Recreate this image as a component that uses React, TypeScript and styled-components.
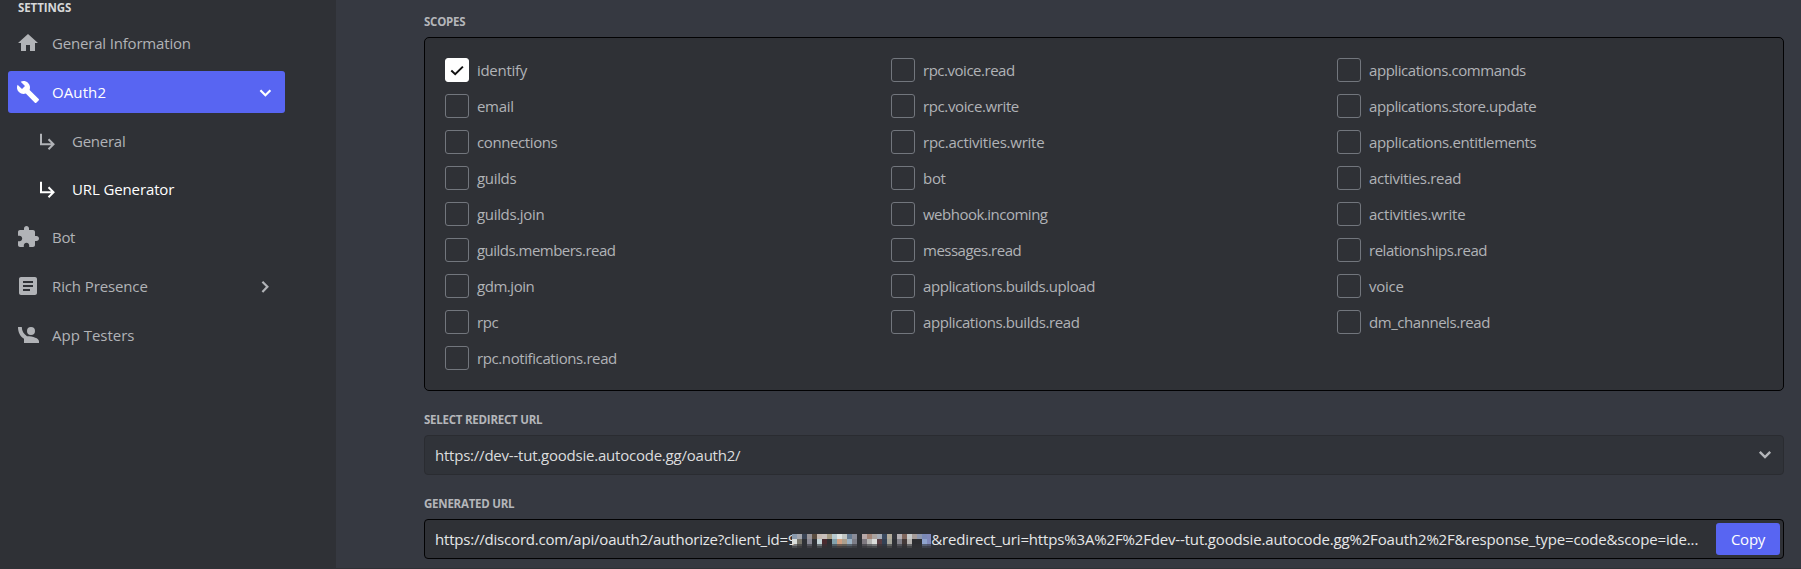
import React, { useState } from "react";
import styled, { createGlobalStyle } from "styled-components";

const Global = createGlobalStyle`
  * { box-sizing: border-box; }
  body {
    margin: 0;
    background: #36393f;
    font-family: "Open Sans", "Noto Sans", sans-serif;
    overflow: hidden;
  }
`;

const Page = styled.div`
  display: flex;
  height: 569px;
  overflow: hidden;
  background: #363941;
  border-bottom: 1px solid #2f3136;
`;

const Sidebar = styled.nav`
  width: 336px;
  flex: none;
  padding: 1px 51px 0 8px;
  background: #2f3136;
`;

const Heading = styled.h2`
  margin: 0;
  height: 14px;
  font-size: 11.5px;
  line-height: 14px;
  font-weight: 700;
  white-space: nowrap;
  letter-spacing: -0.24px;
  color: #b4b6ba;
`;

const SidebarHeading = styled(Heading)`
  padding: 0 0 0 10px;
  letter-spacing: -0.1px;
  color: #d6d7d9;
`;

const NavList = styled.div`
  display: flex;
  flex-direction: column;
  padding-top: 7px;
`;

const NavItem = styled.a<{ $active?: boolean }>`
  display: flex;
  align-items: center;
  height: 42px;
  margin-bottom: 7px;
  padding: 0 8px;
  border-radius: 3px;
  color: ${(p) => (p.$active ? "#fff" : "#b1b3b7")};
  background: ${(p) => (p.$active ? "#5865f2" : "transparent")};
`;

const SubItem = styled(NavItem)<{ $current?: boolean }>`
  height: 41px;
  padding-left: 28px;
  color: ${(p) => (p.$current ? "#fff" : "#b1b3b7")};
`;

const Icon = styled.svg`
  width: 24px;
  height: 24px;
  flex: none;
`;

const Label = styled.span<{ $tracking?: number }>`
  font-size: 15px;
  line-height: 20px;
  white-space: nowrap;
  letter-spacing: ${(p) => p.$tracking ?? -0.3}px;
`;

const NavLabel = styled(Label)`
  flex: 1;
  margin-left: 12px;
`;

const Main = styled.main`
  flex: 1;
  min-width: 0;
  padding: 15px 17px 0 88px;
`;

const ScopeBox = styled.div`
  display: grid;
  grid-template-columns: repeat(3, 1fr);
  height: 354px;
  margin: 8px 0 22px;
  padding: 20px 0 20px 20px;
  border: 1px solid #020203;
  border-radius: 5px;
  background: #2f3136;
`;

const ScopeColumn = styled.div`
  display: flex;
  flex-direction: column;
  gap: 12px;
`;

const Scope = styled.label`
  display: flex;
  align-items: center;
  gap: 8px;
  height: 24px;
  color: #b1b3b7;
`;

const Box = styled.span<{ $on: boolean }>`
  display: flex;
  align-items: center;
  justify-content: center;
  width: 24px;
  height: 24px;
  border: 1px solid ${(p) => (p.$on ? "#fff" : "#72767d")};
  border-radius: 3px;
  background: ${(p) => (p.$on ? "#fff" : "transparent")};
  color: #111;
`;

const Field = styled.div<{ $dark?: boolean }>`
  display: flex;
  align-items: center;
  height: 40px;
  margin: 8px 0 22px;
  padding: 0 3px 0 10px;
  border: 1px solid ${(p) => (p.$dark ? "#020203" : "#2a2c31")};
  border-radius: 4px;
  background: ${(p) => (p.$dark ? "#2f3136" : "#303339")};
  color: ${(p) => (p.$dark ? "#e6e7e8" : "#dcddde")};
`;

const Spacer = styled.span`
  flex: 1;
`;

const SelectArrow = styled.span`
  display: flex;
  margin-right: 3px;
  color: #b4b6ba;
`;

const Mosaic = styled.svg`
  width: 139px;
  height: 14px;
  flex: none;
  margin: 4px 0 0 -4px;
`;

const CopyButton = styled.button`
  width: 64px;
  height: 32px;
  padding: 0;
  border: 0;
  border-radius: 3px;
  background: #5865f2;
  color: #fff;
  font-family: inherit;
`;

const PATHS = {
  home: "M10 20v-6h4v6h5v-8h3L12 3 2 12h3v8z",
  wrench:
    "M22.7 19l-9.1-9.1c.9-2.3.4-5-1.5-6.9-2-2-5-2.4-7.4-1.3L9 6 6 9 1.6 4.7C.4 7.1.9 10.1 2.9 12.1c1.9 1.9 4.6 2.4 6.9 1.5l9.1 9.1c.4.4 1 .4 1.4 0l2.3-2.3c.5-.4.5-1.1.1-1.4z",
  puzzle:
    "M20.5 11H19V7c0-1.1-.9-2-2-2h-4V3.5C13 2.12 11.88 1 10.5 1S8 2.12 8 3.5V5H4c-1.1 0-1.99.9-1.99 2v3.8H3.5c1.49 0 2.7 1.21 2.7 2.7s-1.21 2.7-2.7 2.7H2V20c0 1.1.9 2 2 2h3.8v-1.5c0-1.49 1.21-2.7 2.7-2.7 1.49 0 2.7 1.21 2.7 2.7V22H17c1.1 0 2-.9 2-2v-4h1.5c1.38 0 2.5-1.12 2.5-2.5S21.88 11 20.5 11z",
  article:
    "M19 3H5c-1.1 0-2 .9-2 2v14c0 1.1.9 2 2 2h14c1.1 0 2-.9 2-2V5c0-1.1-.9-2-2-2zm-5 14H7v-2h7v2zm3-4H7v-2h10v2zm0-4H7V7h10v2z",
  person:
    "M2 4h3.8c0 3.7 1.8 7 5.2 9.2C17 13.2 23 15.2 23 18.3V20H8v-4.2C4.2 13.5 2 9.2 2 4zM15 4a4 4 0 1 1 0 8 4 4 0 0 1 0-8z",
};

const STROKES = {
  sub: "M5 4.8v10.5h12.5M12.5 10.3l5 5-5 5",
  down: "M7.4 10.3l5 5 5-5",
  select: "M6.8 8.8l5.2 5.2 5.2-5.2",
  right: "M9.4 7.7l5 5.1-5 5.1",
  check: "M6.3 12.6l3.9 3.6L17.9 8.6",
};

function Glyph({ name }: { name: keyof typeof PATHS }) {
  return (
    <Icon viewBox="0 0 24 24" fill="currentColor">
      <path d={PATHS[name]} />
    </Icon>
  );
}

function Line({ name, width = 2.2 }: { name: keyof typeof STROKES; width?: number }) {
  return (
    <Icon viewBox="0 0 24 24" fill="none" stroke="currentColor" strokeWidth={width}>
      <path d={STROKES[name]} />
    </Icon>
  );
}

type ScopeEntry = [name: string, tracking: number];

const COLUMNS: ScopeEntry[][] = [
  [
    ["identify", -0.3],
    ["email", -0.3],
    ["connections", -0.4],
    ["guilds", -0.33],
    ["guilds.join", -0.33],
    ["guilds.members.read", -0.52],
    ["gdm.join", -0.45],
    ["rpc", -0.35],
    ["rpc.notifications.read", -0.4],
  ],
  [
    ["rpc.voice.read", -0.48],
    ["rpc.voice.write", -0.38],
    ["rpc.activities.write", -0.25],
    ["bot", -0.3],
    ["webhook.incoming", -0.5],
    ["messages.read", -0.5],
    ["applications.builds.upload", -0.43],
    ["applications.builds.read", -0.42],
  ],
  [
    ["applications.commands", -0.44],
    ["applications.store.update", -0.43],
    ["applications.entitlements", -0.37],
    ["activities.read", -0.3],
    ["activities.write", -0.22],
    ["relationships.read", -0.47],
    ["voice", -0.25],
    ["dm_channels.read", -0.45],
  ],
];

const MOSAIC_ROWS = [
  "#8999ac #a4a6ad #3b4556 #999599 #5b4d40 #c6bab2 #c7bfbb #a59c84 #b6cad0 #dfe3e0 #c1c5c3 #657b93 #8a8c98 - #b8a9a9 #a38476 #a9a29f #a5abb5 #3b4a60 #b3ac9b #34363d #b4b0b5 #80675e #c6cacb #a59b98 #8d97af #7b8ab7 #8189bb",
  "#d9dddb #77746a #2f3136 #8a8995 #2f3136 #c4d4d8 #4a2b30 #2d2e32 #82a1ac #cf9f82 #ab9f8d #9bb1c3 #7c7d87 - #7e7980 #b5b5b3 #dadcda #593d43 #334154 #a6a69c #2f3136 #82818a #443a39 #b7b4b1 #2c2d31 #2c2d31 #8fa3ce #8189bb",
].map((row) => row.split(" "));

const MOSAIC_BANDS = [
  { row: 0, y: 0, height: 5, opacity: 1 },
  { row: 1, y: 5, height: 5, opacity: 1 },
  { row: 1, y: 10, height: 2, opacity: 0.4 },
  { row: 1, y: 12, height: 2, opacity: 0.15 },
];

function Redacted() {
  return (
    <Mosaic viewBox="0 0 139 14" shapeRendering="crispEdges">
      {MOSAIC_BANDS.map((b) =>
        MOSAIC_ROWS[b.row].map((c, i) =>
          c === "-" ? null : (
            <rect key={`${b.y}-${i}`} x={i * 5} y={b.y} width={5} height={b.height} fill={c} opacity={b.opacity} />
          )
        )
      )}
    </Mosaic>
  );
}

export default function App() {
  const [checked, setChecked] = useState<string[]>(["identify"]);
  const toggle = (s: string) =>
    setChecked((c) => (c.includes(s) ? c.filter((x) => x !== s) : [...c, s]));

  return (
    <Page>
      <Global />
      <Sidebar>
        <SidebarHeading>SETTINGS</SidebarHeading>
        <NavList>
          <NavItem><Glyph name="home" /><NavLabel $tracking={-0.18}>General Information</NavLabel></NavItem>
          <NavItem $active><Glyph name="wrench" /><NavLabel $tracking={0.1}>OAuth2</NavLabel><Line name="down" /></NavItem>
          <SubItem><Line name="sub" width={2} /><NavLabel $tracking={-0.25}>General</NavLabel></SubItem>
          <SubItem $current><Line name="sub" width={2} /><NavLabel $tracking={-0.12}>URL Generator</NavLabel></SubItem>
          <NavItem><Glyph name="puzzle" /><NavLabel>Bot</NavLabel></NavItem>
          <NavItem><Glyph name="article" /><NavLabel $tracking={-0.12}>Rich Presence</NavLabel><Line name="right" /></NavItem>
          <NavItem><Glyph name="person" /><NavLabel $tracking={-0.01}>App Testers</NavLabel></NavItem>
        </NavList>
      </Sidebar>
      <Main>
        <Heading>SCOPES</Heading>
        <ScopeBox>
          {COLUMNS.map((col, i) => (
            <ScopeColumn key={i}>
              {col.map(([name, tracking]) => (
                <Scope key={name} onClick={() => toggle(name)}>
                  <Box $on={checked.includes(name)}>
                    {checked.includes(name) && <Line name="check" width={2} />}
                  </Box>
                  <Label $tracking={tracking}>{name}</Label>
                </Scope>
              ))}
            </ScopeColumn>
          ))}
        </ScopeBox>
        <Heading>SELECT REDIRECT URL</Heading>
        <Field>
          <Label $tracking={-0.22}>https://dev--tut.goodsie.autocode.gg/oauth2/</Label>
          <Spacer />
          <SelectArrow><Line name="select" width={2.4} /></SelectArrow>
        </Field>
        <Heading>GENERATED URL</Heading>
        <Field $dark>
          <Label $tracking={-0.2}>https://discord.com/api/oauth2/authorize?client_id=9</Label>
          <Redacted />
          <Label $tracking={-0.16}>&amp;redirect_uri=https%3A%2F%2Fdev--tut.goodsie.autocode.gg%2Foauth2%2F&amp;response_type=code&amp;scope=ide...</Label>
          <Spacer />
          <CopyButton><Label $tracking={-0.25}>Copy</Label></CopyButton>
        </Field>
      </Main>
    </Page>
  );
}
